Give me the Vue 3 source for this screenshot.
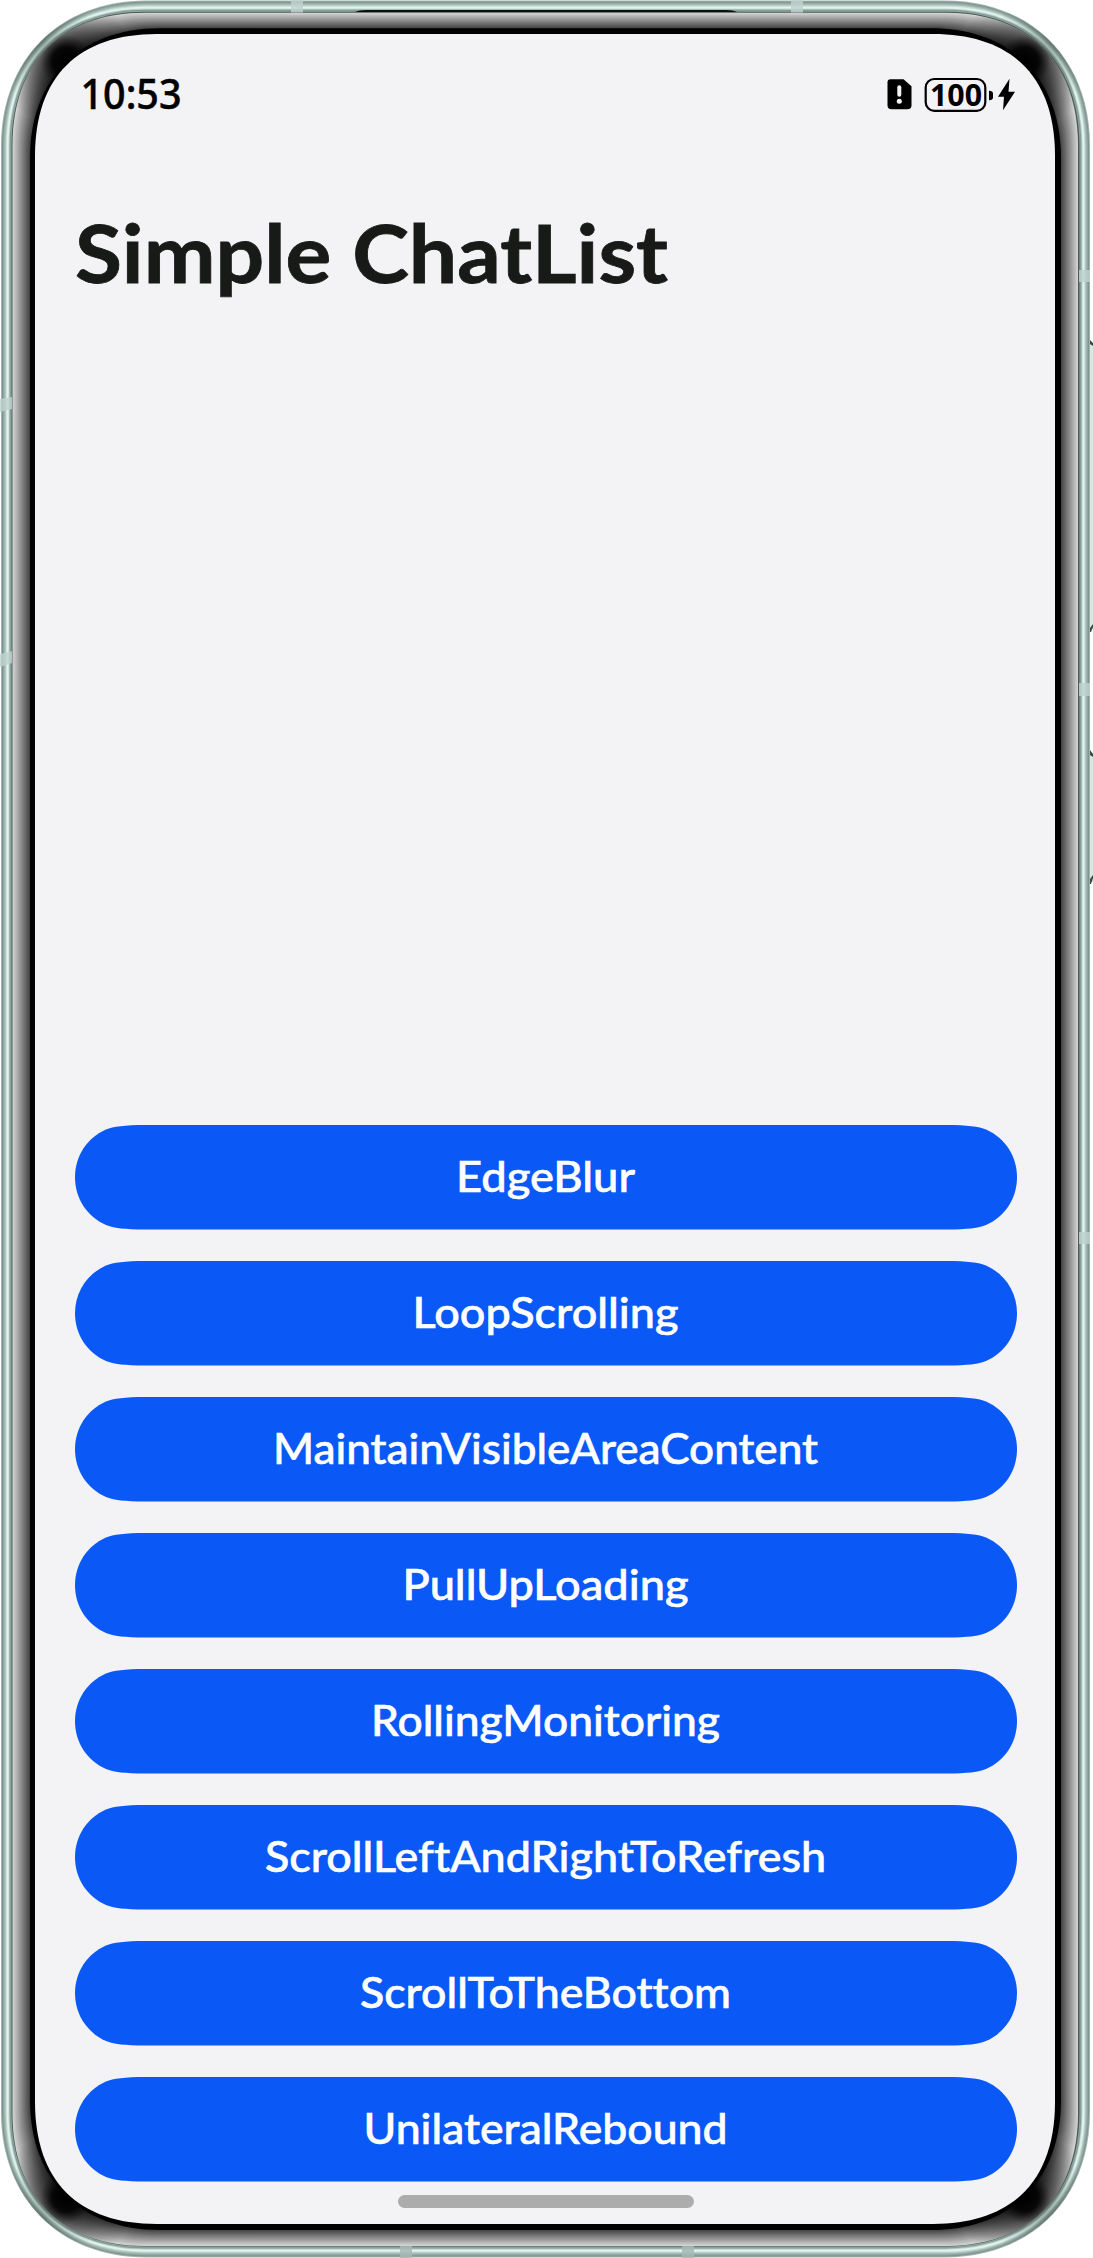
<script setup>
const buttons = [
  ['EdgeBlur', 179], ['LoopScrolling', 266], ['MaintainVisibleAreaContent', 545], ['PullUpLoading', 286],
  ['RollingMonitoring', 349], ['ScrollLeftAndRightToRefresh', 561], ['ScrollToTheBottom', 371], ['UnilateralRebound', 364],
].map(([label, width]) => ({ label, width }))

// Rounded outline with continuous-curvature corners, e = corner extent, m = control offset
function outline(l, t, r, b, e, m) {
  return `M${l + e} ${t}H${r - e}C${r - m} ${t} ${r} ${t + m} ${r} ${t + e}V${b - e}C${r} ${b - m} ${r - m} ${b} ${r - e} ${b}H${l + e}C${l + m} ${b} ${l} ${b - m} ${l} ${b - e}V${t + e}C${l} ${t + m} ${l + m} ${t} ${l + e} ${t}Z`
}
const metal = ['#a3b5b0', '#7f938d', '#8ea69f', '#9bb2ab', '#adc4bd', '#c8dcd6', '#e4f4f0', '#dff0eb', '#b5cac4', '#829c95', '#8ca69e', '#4c5a56']
const layers = metal.map((fill, i) => ({
  fill, d: outline(1 + i * 0.96, 0.4 + i * 1.04, 1090 - i * 0.96, 2257.4 - i, 145 - i, 59 - i * 0.8),
}))
for (let i = 0; i < 34; i++) {
  const p = i / 33
  const g = Math.round(212 - 146 * p)
  layers.push({ fill: `rgb(${g},${g},${g})`, d: outline(12.5 + 17.3 * p, 12.8 + 15.4 * p, 1078 - 17 * p, 2246 - 16 * p, 133 - 3 * p, 49 + p) })
}
const rim = outline(12.5, 12.8, 1078, 2246, 133, 49)
const shell = outline(1, 0.4, 1090, 2257.4, 145, 59)
const bezel = outline(30, 28.3, 1061, 2230, 130, 50)
const screen = outline(35, 34, 1055, 2224, 122, 43)
const corners = [[66, 61], [1025, 61], [66, 2198], [1025, 2198]]
const metalCorners = [[38, 40], [1053, 40], [38, 2218], [1053, 2218]]
const buttonShape = 'M70 0H872C892 0 904 1.500 911 4.500C930 13 942 31 942 52.300C942 73.600 930 91.600 911 100.100C904 103.100 892 104.600 872 104.600H70C50 104.600 38 103.100 31 100.100C12 91.600 0 73.600 0 52.300C0 31 12 13 31 4.500C38 1.500 50 0 70 0Z'
</script>

<template>
  <main class="phone">
    <svg class="shell" width="1093" height="2258" viewBox="0 0 1093 2258" aria-hidden="true">
      <defs>
        <radialGradient id="shade">
          <stop offset="0" stop-color="#000" />
          <stop offset=".2" stop-color="#000" stop-opacity=".95" />
          <stop offset=".38" stop-color="#000" stop-opacity=".55" />
          <stop offset=".7" stop-color="#000" stop-opacity=".25" />
          <stop offset="1" stop-color="#000" stop-opacity="0" />
        </radialGradient>
        <radialGradient id="metalShade">
          <stop offset="0" stop-color="#2f443e" stop-opacity=".4" />
          <stop offset="1" stop-color="#2f443e" stop-opacity="0" />
        </radialGradient>
        <clipPath id="shellClip"><path :d="shell" /></clipPath>
        <clipPath id="rimClip"><path :d="rim" /></clipPath>
      </defs>
      <g fill="#d9e7e3" stroke="#a3b7b1" stroke-width=".5">
        <rect x="1088" y="344" width="6" height="285" />
        <rect x="1088" y="754" width="6" height="127" />
      </g>
      <path v-for="(layer, i) in layers.slice(0, 12)" :key="i" :d="layer.d" :fill="layer.fill" />
      <g clip-path="url(#shellClip)">
        <circle v-for="(c, i) in metalCorners" :key="i" :cx="c[0]" :cy="c[1]" r="58" fill="url(#metalShade)" />
      </g>
      <path v-for="(layer, i) in layers.slice(12)" :key="i" :d="layer.d" :fill="layer.fill" />
      <g clip-path="url(#rimClip)">
        <circle v-for="(c, i) in corners" :key="i" :cx="c[0]" :cy="c[1]" r="68" fill="url(#shade)" />
      </g>
      <path :d="bezel" />
      <path :d="screen" fill="#f3f3f5" />
      <g fill="#c0d2cd" fill-opacity=".82">
        <path d="M291 0H303V12.5H291ZM791 0H803V12.5H791Z" />
        <path d="M0 399L12 397V409L0 412ZM0 654L12 651V663L0 667Z" />
        <path d="M1079 270H1090V282H1079ZM1079 683H1090V696H1079ZM1079 1232H1090V1244H1079Z" />
      </g>
      <path d="M400 2246H412V2258H400ZM682 2246H694V2258H682Z" fill="#a7b9b4" fill-opacity=".85" />
      <path d="M355 12Q359 10 366 10H726Q733 10 737 12Z" fill="#0b100e" />
      <path d="M1090 340L1093 343V346L1090 344ZM1090 628L1093 624V627L1091 632H1090ZM1090 750L1093 754V757L1090 755ZM1090 879L1093 875V878L1091 884H1090Z" fill="#384b43" />
    </svg>

    <header class="status">
      <svg class="fit" width="101" height="44"><text x="-1.500" y="34" textLength="101" lengthAdjust="spacingAndGlyphs" class="time">10:53</text></svg>
      <svg class="fit" width="130" height="46" viewBox="0 0 130 46" aria-label="Battery 100, charging">
        <g transform="translate(-.5 1.200)">
          <path d="M4 3H17L25 10V29Q25 33 21 33H5Q1 33 1 29V6Q1 3 4 3Z" />
          <path d="M12.800 11V18.500" stroke="#f3f3f5" stroke-width="4" stroke-linecap="round" />
          <circle cx="12.800" cy="25" r="2.500" fill="#f3f3f5" />
          <rect x="39.200" y="2.800" width="59.600" height="31.800" rx="8.500" fill="none" stroke="#000" stroke-width="2.200" />
          <text x="43.500" y="29.700" textLength="52" lengthAdjust="spacingAndGlyphs" class="charge">100</text>
          <path d="M102.500 14.500Q106.500 14.500 106.500 17.500V21Q106.500 24 102.500 24Z" />
          <path d="M123 2.500L111.500 20.500H117.500L116.500 34L128.500 15.500H122Z" />
        </g>
      </svg>
    </header>

    <h1><svg class="fit" width="592" height="100"><text x="0" y="73" textLength="593" lengthAdjust="spacingAndGlyphs" class="title">Simple ChatList</text></svg></h1>

    <nav>
      <button v-for="b in buttons" :key="b.label" type="button">
        <svg width="942" height="105" viewBox="0 0 942 105">
          <path :d="buttonShape" fill="#0a59f7" />
          <text x="470.500" y="67.300" text-anchor="middle" :textLength="b.width" lengthAdjust="spacingAndGlyphs" class="label">{{ b.label }}</text>
        </svg>
      </button>
    </nav>
    <div class="home"></div>
  </main>
</template>

<style>
body { margin: 0; background: #fff; }
</style>
<style scoped>
.phone { position: relative; box-sizing: border-box; width: 1093px; height: 2258px; padding: 75px 76px 0 75px; display: flex; flex-direction: column; overflow: hidden; font-family: Lato, sans-serif; font-variant-ligatures: none; }
.shell { position: absolute; inset: 0; }
.status, h1, nav, .home { position: relative; }
svg { display: block; }
.fit { overflow: visible; }
.status { display: flex; justify-content: space-between; height: 44px; padding: 0 0 0 7px; }
.time { font: 500 41px "Noto Sans", sans-serif; stroke: #000; stroke-width: .5px; }
.charge { font: 700 30px "Noto Sans", sans-serif; }
h1 { margin: 91px 0 0; height: 100px; }
.title { font: 700 80px Lato, sans-serif; font-variant-ligatures: none; fill: #181a18; stroke: #181a18; stroke-width: .8px; }
nav { display: flex; flex-direction: column; gap: 31.1px; margin-top: 815px; }
button { display: block; width: 942px; height: 104.9px; padding: 0; border: 0; background: none; }
.label { font: 500 43px Lato, sans-serif; font-variant-ligatures: none; fill: #fff; stroke: #fff; stroke-width: .6px; }
.home { width: 296px; height: 13px; margin: 13px auto 0; border-radius: 6.5px; background: #acacad; }
</style>
